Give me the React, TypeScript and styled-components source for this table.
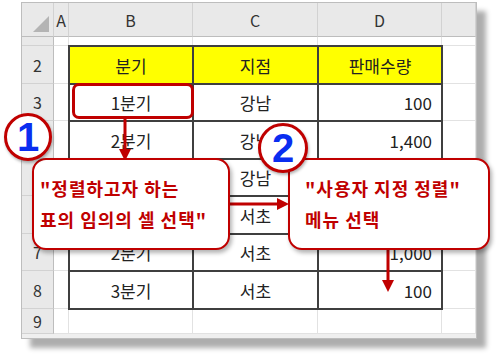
import React from 'react';
import styled, { createGlobalStyle } from 'styled-components';

const RED = '#c00000';
const KR = '"Noto Sans CJK KR", "Noto Sans", sans-serif';
const LINE = '#3f3f3f';

const GlobalStyle = createGlobalStyle`
	html, body {
		margin: 0;
		padding: 0;
		background: #fff;
	}
	body {
		font-family: ${KR};
	}
`;

const Stage = styled.div`
	position: relative;
	width: 500px;
	height: 357px;
	padding: 2px 0 0 21px;
	box-sizing: border-box;
	overflow: hidden;
`;

const Sheet = styled.div`
	width: 456px;
	height: 337px;
	box-sizing: border-box;
	border: 1px solid #bdbdbd;
	background: #fff;
	box-shadow: 9px 9px 5px rgba(0, 0, 0, 0.32);
	display: grid;
	grid-template-columns: 32px 15px 124px 125px 124px 1fr;
	grid-template-rows: 34px 9px 38px 37px 38px 37px 38px 37px 38px 25px 1fr;
`;

const ColHeader = styled.div`
	background: #e9e9e9;
	border-right: 1px solid #d2d2d2;
	border-bottom: 1px solid #bdbdbd;
	display: flex;
	align-items: center;
	justify-content: center;
	font-family: ${KR};
	font-size: 16px;
	color: #333;
`;

const Corner = styled(ColHeader)`
	position: relative;
	&::after {
		content: '';
		position: absolute;
		right: 4px;
		bottom: 4px;
		width: 0;
		height: 0;
		border-left: 16px solid transparent;
		border-bottom: 16px solid #b4b4b4;
	}
`;

const RowHeader = styled.div`
	background: #e9e9e9;
	border-right: 1px solid #bdbdbd;
	border-bottom: 1px solid #d2d2d2;
	display: flex;
	align-items: center;
	justify-content: center;
	font-size: 16px;
	color: #333;
	overflow: hidden;
`;

const Blank = styled.div<{ $col: number; $row: number }>`
	grid-column: ${p => p.$col};
	grid-row: ${p => p.$row};
	border-right: 1px solid #e2e2e2;
	border-bottom: 1px solid #e2e2e2;
`;

const BottomStrip = styled.div`
	grid-column: 1 / -1;
	grid-row: 11;
	background: #efefef;
`;

const Table = styled.div`
	grid-column: 3 / 6;
	grid-row: 3 / 10;
	align-self: start;
	justify-self: start;
	margin: -1px 0 0 -1px;
	display: grid;
	grid-template-columns: 124px 125px 124px;
	grid-template-rows: 38px 37px 38px 37px 38px 37px 38px;
	border-top: 2px solid ${LINE};
	border-left: 2px solid ${LINE};
	position: relative;
	z-index: 1;
`;

const Cell = styled.div<{ $head?: boolean; $right?: boolean }>`
	box-sizing: border-box;
	border-right: 2px solid ${LINE};
	border-bottom: 2px solid ${LINE};
	background: ${p => (p.$head ? '#ffff00' : '#fff')};
	display: flex;
	align-items: center;
	justify-content: ${p => (p.$right ? 'flex-end' : 'center')};
	padding: 0 ${p => (p.$right ? 9 : 0)}px 0 0;
	font-size: 17px;
	color: #222;
`;

const SelectBox = styled.div`
	position: absolute;
	left: 72px;
	top: 83px;
	width: 122px;
	height: 36px;
	box-sizing: border-box;
	border: 3px solid ${RED};
	border-radius: 7px;
	z-index: 2;
`;

const Callout = styled.div<{ $left: number; $width: number; $pad: number }>`
	position: absolute;
	left: ${p => p.$left}px;
	top: 158px;
	width: ${p => p.$width}px;
	height: 92px;
	box-sizing: border-box;
	border: 2px solid ${RED};
	border-radius: 14px;
	background: #fff;
	box-shadow: 2px 3px 4px rgba(0, 0, 0, 0.3);
	padding: 13px 0 0 ${p => p.$pad}px;
	font-family: ${KR};
	font-weight: 700;
	font-size: 18px;
	letter-spacing: 1px;
	line-height: 31px;
	color: ${RED};
	white-space: nowrap;
	z-index: 3;
`;

const Badge = styled.div<{ $left: number; $top: number; $size: number }>`
	position: absolute;
	left: ${p => p.$left}px;
	top: ${p => p.$top}px;
	width: ${p => p.$size}px;
	height: ${p => p.$size}px;
	box-sizing: border-box;
	border: 3px solid ${RED};
	border-radius: 50%;
	background: #fff;
	box-shadow: 1px 2px 3px rgba(0, 0, 0, 0.3);
	display: flex;
	align-items: center;
	justify-content: center;
	font-family: 'Liberation Sans', Arial, sans-serif;
	font-weight: 700;
	font-size: 40px;
	color: #0a2df0;
	z-index: 4;
`;

const Arrows = styled.svg`
	position: absolute;
	left: 0;
	top: 0;
	z-index: 2;
	pointer-events: none;
`;

const COLS = ['A', 'B', 'C', 'D', ''];

const DATA: string[][] = [
	['분기', '지점', '판매수량'],
	['1분기', '강남', '100'],
	['2분기', '강남', '1,400'],
	['3분기', '강남', '1,200'],
	['1분기', '서초', '900'],
	['2분기', '서초', '1,000'],
	['3분기', '서초', '100'],
];

const App = () => {
	const rowLabels = ['1', '2', '3', '4', '5', '6', '7', '8', '9'];
	const blanks: { col: number; row: number }[] = [];
	for (let row = 2; row <= 10; row++) {
		blanks.push({ col: 2, row });
		blanks.push({ col: 6, row });
	}
	for (const col of [3, 4, 5]) {
		blanks.push({ col, row: 2 });
		blanks.push({ col, row: 10 });
	}

	return (
		<Stage>
			<GlobalStyle />
			<Sheet>
				<Corner style={{ gridColumn: 1, gridRow: 1 }} />
				{COLS.map((c, i) => (
					<ColHeader key={i} style={{ gridColumn: i + 2, gridRow: 1 }}>{c}</ColHeader>
				))}
				{rowLabels.map((r, i) => (
					<RowHeader key={r} style={{ gridColumn: 1, gridRow: i + 2 }}>
						{r === '1' ? '' : r}
					</RowHeader>
				))}
				{blanks.map(b => (
					<Blank key={`${b.col}-${b.row}`} $col={b.col} $row={b.row} />
				))}
				<Table>
					{DATA.map((row, ri) =>
						row.map((v, ci) => (
							<Cell key={`${ri}-${ci}`} $head={ri === 0} $right={ri > 0 && ci === 2}>
								{v}
							</Cell>
						))
					)}
				</Table>
				<BottomStrip />
			</Sheet>

			<SelectBox />

			<Arrows width={500} height={357} viewBox="0 0 500 357">
				<g fill={RED} stroke={RED}>
					<line x1={125} y1={119} x2={125} y2={151} strokeWidth={3} />
					<polygon points="119,149 131,149 125,161" stroke="none" />
					<line x1={230} y1={204} x2={278} y2={204} strokeWidth={3} />
					<polygon points="277,198 277,210 289,204" stroke="none" />
					<line x1={388} y1={249} x2={388} y2={282} strokeWidth={3} />
					<polygon points="382,280 394,280 388,292" stroke="none" />
				</g>
			</Arrows>

			<Callout $left={32} $width={198} $pad={6}>
				"정렬하고자 하는
				<br />
				표의 임의의 셀 선택"
			</Callout>
			<Callout $left={288} $width={202} $pad={15}>
				"사용자 지정 정렬"
				<br />
				메뉴 선택
			</Callout>

			<Badge $left={4} $top={113} $size={48}>1</Badge>
			<Badge $left={258} $top={123} $size={50}>2</Badge>
		</Stage>
	);
};

export default App;
